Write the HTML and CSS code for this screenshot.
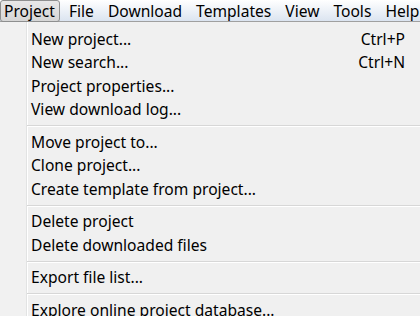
FILE: index.html
```html
<!DOCTYPE html>
<html>
<head>
<meta charset="utf-8">
<link rel="stylesheet" href="styles.css">
</head>
<body>
<div class="menubar">
  <span class="top active">Project</span>
  <span class="top">File</span>
  <span class="top">Download</span>
  <span class="top">Templates</span>
  <span class="top">View</span>
  <span class="top">Tools</span>
  <span class="top">Help</span>
</div>
<div class="menu">
  <div class="item"><span>New project...</span><span class="key">Ctrl+P</span></div>
  <div class="item"><span>New search...</span><span class="key">Ctrl+N</span></div>
  <div class="item"><span>Project properties...</span></div>
  <div class="item"><span>View download log...</span></div>
  <div class="sep"></div>
  <div class="item"><span>Move project to...</span></div>
  <div class="item"><span>Clone project...</span></div>
  <div class="item"><span>Create template from project...</span></div>
  <div class="sep"></div>
  <div class="item"><span>Delete project</span></div>
  <div class="item"><span>Delete downloaded files</span></div>
  <div class="sep"></div>
  <div class="item"><span>Export file list...</span></div>
  <div class="sep"></div>
  <div class="item"><span>Explore online project database...</span></div>
</div>
</body>
</html>
```
FILE: styles.css
```css
html, body {
  margin: 0;
  padding: 0;
  background: #f0f0f0;
  overflow: hidden;
  height: 316px;
}
body {
  font-family: "Noto Sans", "Open Sans", sans-serif;
  font-size: 15.6px;
  color: #000;
}
.menubar {
  display: flex;
  height: 22px;
  background: linear-gradient(#ffffff, #dbe4f0);
  border-bottom: 1px solid #a0a0a0;
  box-sizing: border-box;
  white-space: nowrap;
  align-items: stretch;
}
.top {
  display: flex;
  align-items: center;
  padding: 0 7px 0 7px;
  line-height: 20px;
}
.top.active {
  padding: 0 4px 0 3px;
  margin-right: 2px;
  border: 1px solid #8e8f8f;
  border-radius: 3px;
  background: linear-gradient(#e8e8e8, #d6d6d6);
  box-sizing: border-box;
  height: 22px;
}
.menu {
  position: relative;
  padding-top: 5px;
  background: linear-gradient(to right, #f1f1f1 0, #f1f1f1 26px, #e2e3e3 26px, #e2e3e3 27px, #ffffff 27px, #ffffff 28px, #f0f0f0 28px);
  height: 293px;
}
.item {
  display: flex;
  justify-content: space-between;
  align-items: center;
  height: 23.5px;
  padding: 0 15px 0 31px;
  white-space: nowrap;
}
.sep {
  height: 9px;
  margin-left: 27px;
  box-sizing: border-box;
  padding-top: 4px;
}
.sep::before {
  content: "";
  display: block;
  height: 1px;
  background: #d7d7d7;
  border-bottom: 1px solid #ffffff;
}
```
